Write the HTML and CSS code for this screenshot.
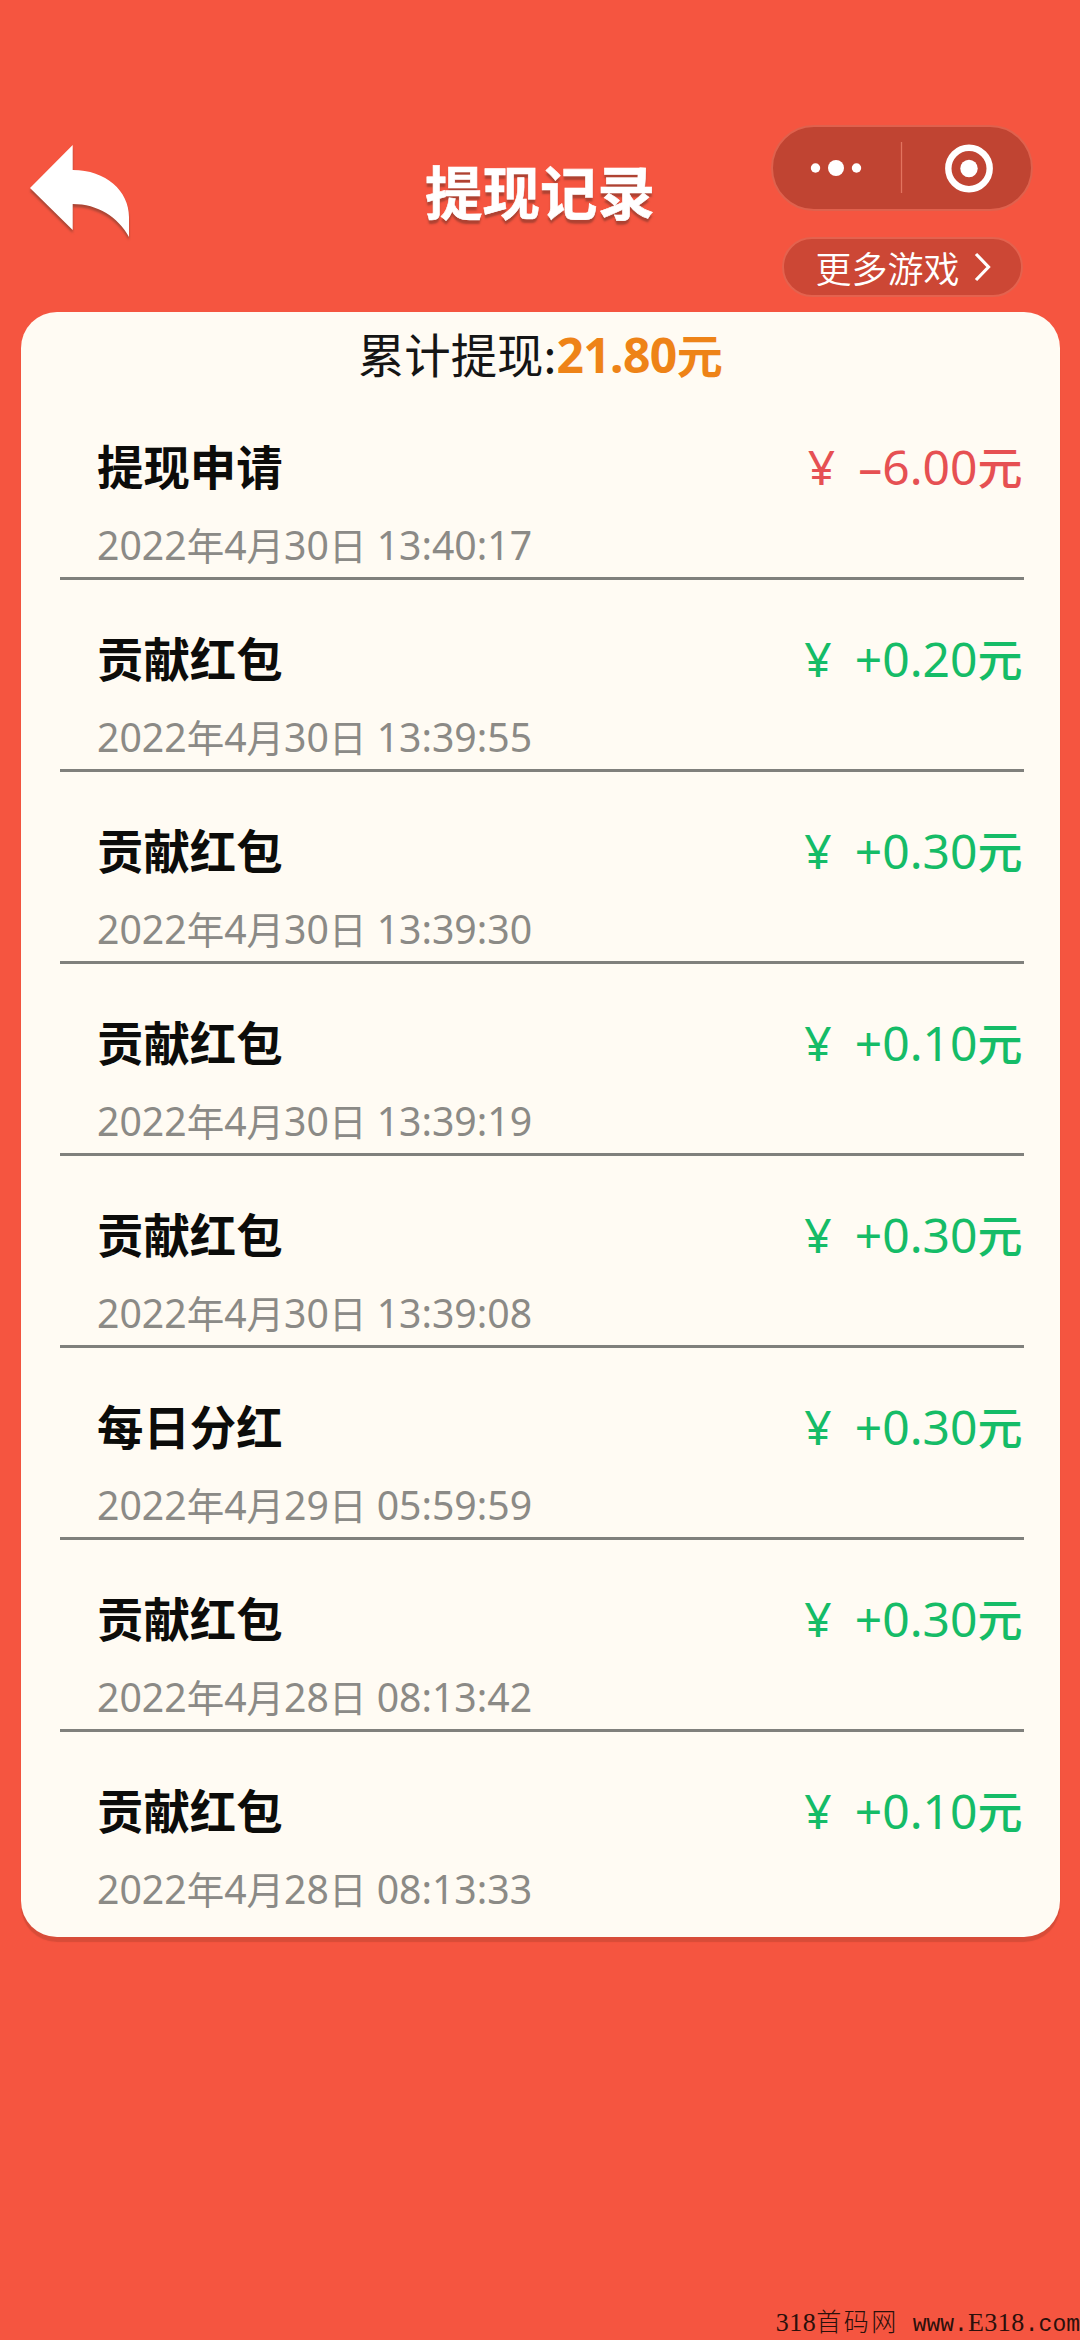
FILE: index.html
```html
<!DOCTYPE html>
<html lang="zh-CN">
<head>
<meta charset="utf-8">
<title>提现记录</title>
<link rel="stylesheet" href="styles.css">
</head>
<body>
<header class="header">
  <svg class="back" viewBox="0 0 102 98" width="102" height="98"><path d="M0 43 42.7 0V25C76 25 99 46 99 72V92C88 72 68 59 42.7 59V85Z" fill="#fff"/></svg>
  <h1 class="title">提现记录</h1>
  <div class="tools">
    <div class="capsule">
      <svg viewBox="0 0 258 82" width="258" height="82" fill="#fff">
        <circle cx="42.500" cy="41" r="4.7"/><circle cx="63" cy="41" r="8"/><circle cx="83.500" cy="41" r="4.7"/>
        <path d="M128.500 15V66" stroke="#e2745f" stroke-width="1.3"/>
        <circle cx="196" cy="41.500" r="20.7" fill="none" stroke="#fff" stroke-width="6.4"/><circle cx="196" cy="41.500" r="8.7"/>
      </svg>
    </div>
    <div class="more"><span>更多游戏</span><svg viewBox="0 0 17 30" width="17" height="30"><path d="M2 2 14.500 15 2 28" fill="none" stroke="#fff" stroke-width="3.200"/></svg></div>
  </div>
</header>
<main class="card">
  <div class="summary"><span class="cjk">累计提现:</span><span class="total">21.80<span class="cjk">元</span></span></div>
  <ul class="records">
    <li class="record"><div><div class="name">提现申请</div><div class="date">2022<i>年</i>4<i>月</i>30<i>日</i> 13:40:17</div></div><div class="amount out"><b>¥</b>–6.00<span class="cjk">元</span></div></li>
    <li class="record"><div><div class="name">贡献红包</div><div class="date">2022<i>年</i>4<i>月</i>30<i>日</i> 13:39:55</div></div><div class="amount"><b>¥</b>+0.20<span class="cjk">元</span></div></li>
    <li class="record"><div><div class="name">贡献红包</div><div class="date">2022<i>年</i>4<i>月</i>30<i>日</i> 13:39:30</div></div><div class="amount"><b>¥</b>+0.30<span class="cjk">元</span></div></li>
    <li class="record"><div><div class="name">贡献红包</div><div class="date">2022<i>年</i>4<i>月</i>30<i>日</i> 13:39:19</div></div><div class="amount"><b>¥</b>+0.10<span class="cjk">元</span></div></li>
    <li class="record"><div><div class="name">贡献红包</div><div class="date">2022<i>年</i>4<i>月</i>30<i>日</i> 13:39:08</div></div><div class="amount"><b>¥</b>+0.30<span class="cjk">元</span></div></li>
    <li class="record"><div><div class="name">每日分红</div><div class="date">2022<i>年</i>4<i>月</i>29<i>日</i> 05:59:59</div></div><div class="amount"><b>¥</b>+0.30<span class="cjk">元</span></div></li>
    <li class="record"><div><div class="name">贡献红包</div><div class="date">2022<i>年</i>4<i>月</i>28<i>日</i> 08:13:42</div></div><div class="amount"><b>¥</b>+0.30<span class="cjk">元</span></div></li>
    <li class="record"><div><div class="name">贡献红包</div><div class="date">2022<i>年</i>4<i>月</i>28<i>日</i> 08:13:33</div></div><div class="amount"><b>¥</b>+0.10<span class="cjk">元</span></div></li>
  </ul>
</main>
<footer class="footer">318<span class="site">首码网</span> <span class="mono">www.</span>E318<span class="mono">.com</span></footer>
</body>
</html>
```
FILE: styles.css
```css
* { box-sizing: border-box; }
body {
  margin: 0;
  width: 1080px;
  height: 2340px;
  overflow: hidden;
  display: flex;
  flex-direction: column;
  background: #f55540;
  font-family: "Noto Sans", "Noto Sans CJK SC", sans-serif;
}
i, b { font-style: normal; font-weight: inherit; }
.header {
  height: 312px;
  flex: none;
  padding: 125px 47px 0 30px;
  display: grid;
  grid-template-columns: 380px 1fr 262px;
  align-items: start;
}
.back { margin-top: 20px; overflow: visible; filter: drop-shadow(0 3px 1px rgba(120, 60, 45, .6)); }
.title {
  margin: 25px 0 0 15px;
  font: 700 57.5px/80px "Noto Sans CJK SC", sans-serif;
  color: #fff;
  white-space: nowrap;
  -webkit-text-stroke: .6px #fff;
  text-shadow: 0 4px 2px rgba(150, 60, 45, .75);
}
.tools { display: flex; flex-direction: column; align-items: center; gap: 26px; }
.capsule {
  width: 262px;
  height: 86px;
  border: 2px solid #e0614d;
  border-radius: 43px;
  background: #c04432;
}
.capsule svg { display: block; }
.more {
  width: 241px;
  height: 60px;
  border: 2px solid #e4624e;
  border-radius: 30px;
  background: #cc4735;
  display: flex;
  align-items: center;
  padding-left: 32px;
  gap: 14px;
  color: #fff;
  font: 350 36px/58px "Noto Sans CJK SC", sans-serif;
}
.card {
  width: 1039px;
  height: 1625px;
  flex: none;
  margin-left: 20.500px;
  border-radius: 36px;
  background: #fffbf3;
  box-shadow: 0 5px 1px #d84c38;
}
.summary {
  height: 76px;
  display: flex;
  justify-content: center;
  align-items: baseline;
  font-size: 48px;
  line-height: 86px;
  color: #151515;
}
.cjk { font-family: "Noto Sans CJK SC", sans-serif; font-size: 45px; font-weight: 500; line-height: 1; }
.summary > .cjk { font-size: 46.400px; font-weight: 400; }
.total { color: #ee8317; font-weight: 700; letter-spacing: -.6px; }
.total .cjk { font-weight: 700; font-size: 46px; }
.records { list-style: none; margin: 0; padding: 0 36px 0 39.500px; }
.record {
  height: 192px;
  border-bottom: 3px solid #80807c;
  display: flex;
  justify-content: space-between;
  padding: 42px 0 0 37px;
}
.record:last-child { border: 0; }
.name { font: 700 46.400px/70px "Noto Sans CJK SC", sans-serif; color: #0c0c0a; }
.date { margin-top: 17px; font-size: 39.200px; line-height: 56px; color: #8b8a86; white-space: nowrap; }
.date i { font-family: "Noto Sans CJK SC", sans-serif; font-size: 37.500px; line-height: 1; }
.amount { padding-right: 1px; font-size: 48px; line-height: 74px; color: #15bc67; white-space: nowrap; }
.amount b { margin-right: 23px; }
.amount.out { color: #e65052; }
.footer {
  margin-top: auto;
  height: 34px;
  text-align: right;
  white-space: nowrap;
  font: 26px/34px "Liberation Serif", "Noto Sans CJK SC", serif;
  letter-spacing: .5px;
  word-spacing: 7px;
  color: #2b100b;
}
.site { font: 300 25px/26px "Noto Sans CJK SC", sans-serif; letter-spacing: 2.500px; }
.mono { font: 23px/26px "Liberation Mono", monospace; letter-spacing: 0; }
```
